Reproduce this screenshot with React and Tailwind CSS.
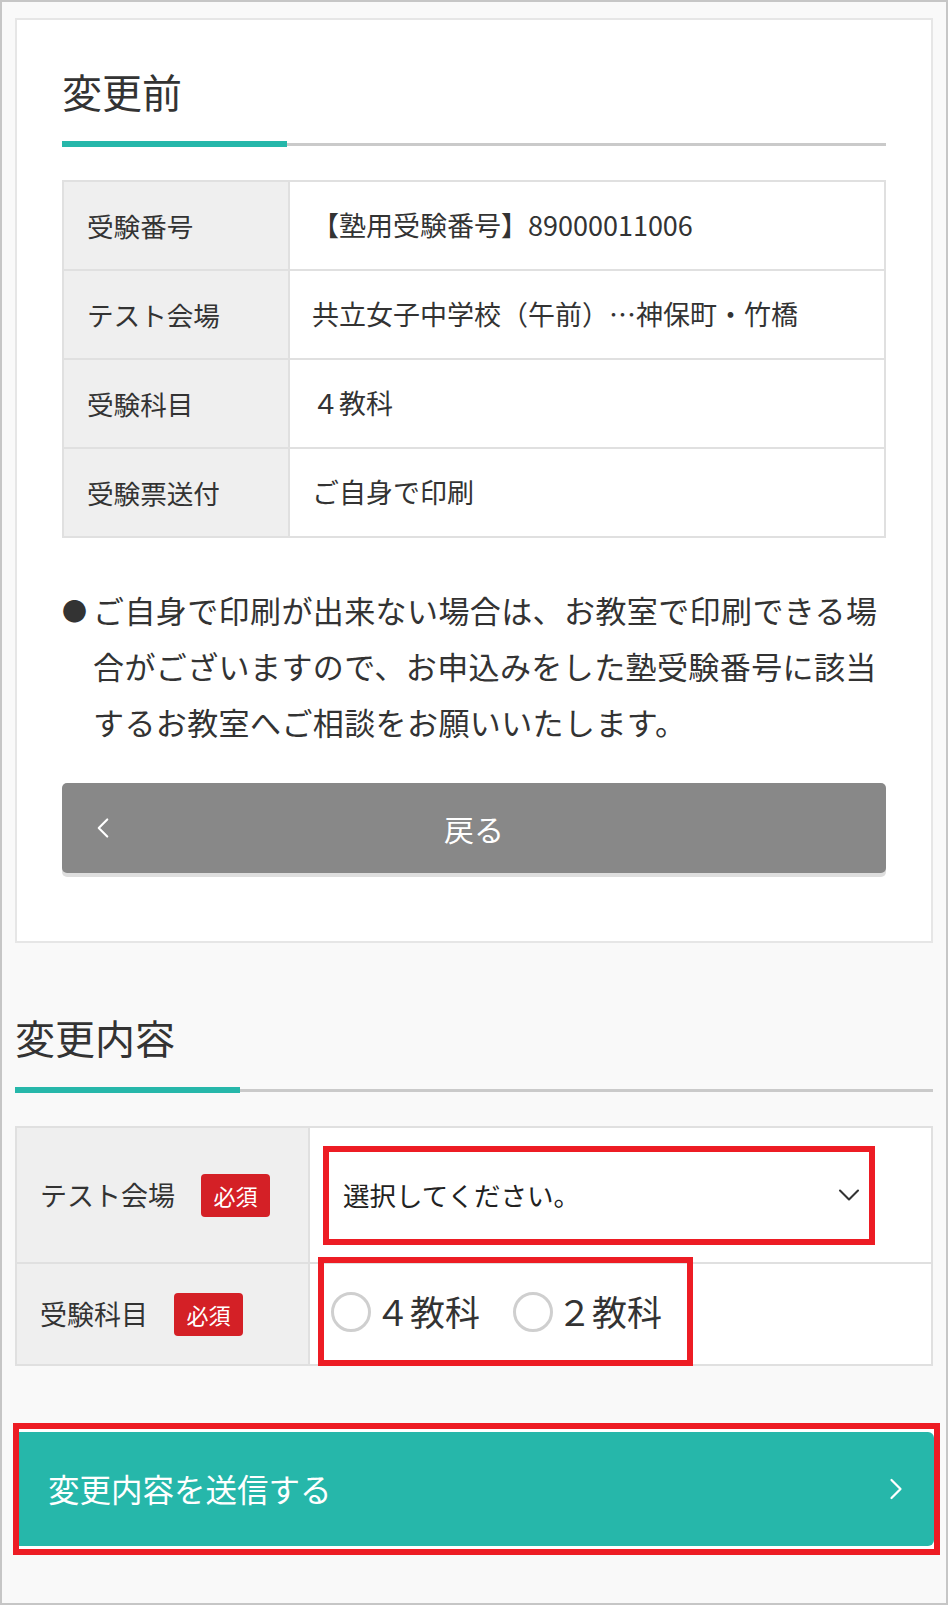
import { ChevronLeft, ChevronRight, ChevronDown } from 'lucide-react';

const beforeRows = [
  { label: '受験番号', value: '【塾用受験番号】89000011006' },
  { label: 'テスト会場', value: '共立女子中学校（午前）…神保町・竹橋' },
  { label: '受験科目', value: '４教科' },
  { label: '受験票送付', value: 'ご自身で印刷' },
];

function SectionTitle({ children }) {
  return (
    <div>
      <h2 className="text-[40px] leading-none text-[#333] font-normal">{children}</h2>
      <div className="flex items-center mt-[30px]">
        <div className="w-[225px] h-[6px] bg-[#26b7aa]" />
        <div className="flex-1 h-[3px] bg-[#cacaca]" />
      </div>
    </div>
  );
}

function Badge() {
  return (
    <span className="ml-[26px] w-[69px] h-[43px] rounded-[4px] bg-[#d42026] text-white text-[22px] flex items-center justify-center">
      必須
    </span>
  );
}

function Radio({ label }) {
  return (
    <label className="flex items-center">
      <span className="w-[40px] h-[40px] rounded-full border-[3px] border-[#cfcfcf] bg-white" />
      <span className="ml-[4px] text-[35px] text-[#333]">{label}</span>
    </label>
  );
}

export default function App() {
  return (
    <div className="w-[948px] h-[1605px] border-2 border-[#c6c6c6] bg-[#f9f9f9] px-[13px] pt-[16px] font-['Noto_Sans_CJK_JP','Noto_Sans',sans-serif] text-[#333]">
      {/* Before card */}
      <div className="bg-white border-2 border-[#e6e6e6] px-[45px] pt-[51px] pb-[68px]">
        <SectionTitle>変更前</SectionTitle>

        <div className="mt-[33px] border-2 border-[#e0e0e0]">
          {beforeRows.map((row, i) => (
            <div key={row.label} className={`flex ${i > 0 ? 'h-[89px] border-t-2 border-[#e0e0e0]' : 'h-[87px]'}`}>
              <div className="w-[226px] shrink-0 bg-[#efefef] border-r-2 border-[#e0e0e0] flex items-center pl-[23px] text-[26.6px]">
                {row.label}
              </div>
              <div className="flex-1 flex items-center pl-[22px] text-[27px]">{row.value}</div>
            </div>
          ))}
        </div>

        <p className="mt-[44px] pl-[31px] -indent-[31px] text-[31px] leading-[56px] tracking-[0.4px]">
          <span className="inline-block w-[31px] indent-0 text-[25px] align-[2px]">●</span>
          ご自身で印刷が出来ない場合は、お教室で印刷できる場合がございますので、お申込みをした塾受験番号に該当するお教室へご相談をお願いいたします。
        </p>

        <button className="mt-[33px] w-full h-[90px] rounded-[5px] bg-[#888888] shadow-[0_4px_0_#dedede] relative flex items-center justify-center text-white text-[30px]">
          <ChevronLeft className="absolute left-[24px] w-[34px] h-[34px]" strokeWidth={1.5} />
          戻る
        </button>
      </div>

      {/* Change content */}
      <div className="mt-[74px]">
        <SectionTitle>変更内容</SectionTitle>
      </div>

      <div className="mt-[33px] border-2 border-[#e0e0e0] bg-white">
        <div className="flex h-[134px]">
          <div className="w-[293px] shrink-0 bg-[#efefef] border-r-2 border-[#e0e0e0] flex items-center pl-[23px] text-[27px]">
            テスト会場
            <Badge />
          </div>
          <div className="flex-1 flex items-center pl-[13px]">
            <div className="w-[552px] h-[99px] border-[6px] border-[#ed1c24] bg-white flex items-center justify-between pl-[14px] pr-[2px]">
              <span className="text-[26.5px] text-[#222]">選択してください。</span>
              <ChevronDown className="w-[36px] h-[36px] text-[#333]" strokeWidth={1.4} />
            </div>
          </div>
        </div>
        <div className="flex h-[102px] border-t-2 border-[#e0e0e0]">
          <div className="w-[293px] shrink-0 bg-[#efefef] border-r-2 border-[#e0e0e0] flex items-center pl-[23px] text-[27px]">
            受験科目
            <Badge />
          </div>
          <div className="flex-1 flex items-start pl-[8px]">
            <div className="-mt-[7px] w-[375px] h-[109px] border-[6px] border-[#ed1c24] flex items-center pl-[7px] gap-[33px]">
              <Radio label="４教科" />
              <Radio label="２教科" />
            </div>
          </div>
        </div>
      </div>

      {/* Submit */}
      <div className="mt-[57px] -ml-[2px] -mr-[7px] border-[6px] border-[#ed1c24] bg-white py-[3px]">
        <button className="w-full h-[114px] bg-[#26b7aa] rounded-r-[6px] flex items-center justify-between pl-[29px] pr-[20px] text-white text-[31.5px]">
          変更内容を送信する
          <ChevronRight className="w-[36px] h-[36px]" strokeWidth={1.5} />
        </button>
      </div>
    </div>
  );
}
